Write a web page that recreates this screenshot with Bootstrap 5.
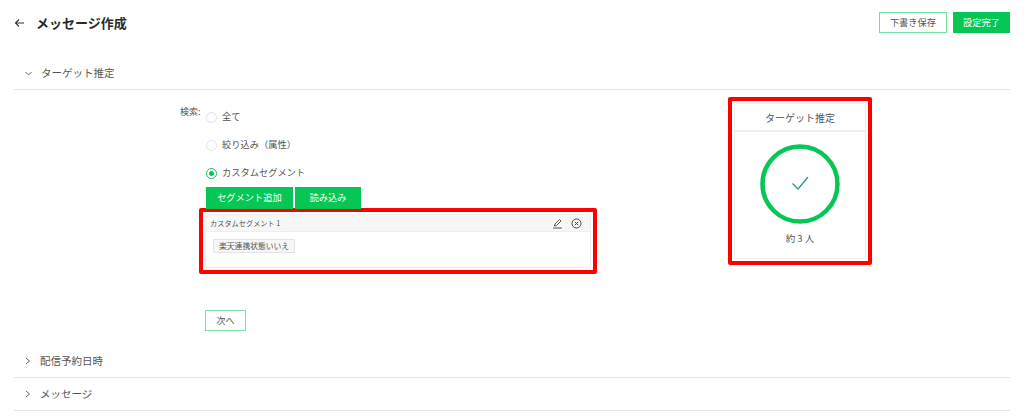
<!DOCTYPE html>
<html lang="ja">
<head>
<meta charset="utf-8">
<title>メッセージ作成</title>
<link href="https://cdn.jsdelivr.net/npm/bootstrap@5.3.0/dist/css/bootstrap.min.css" rel="stylesheet">
<style>
html,body{height:416px;overflow:hidden;background:#fff}
body{font-family:"Noto Sans CJK JP","Noto Sans",sans-serif;color:#555;font-size:10px;padding:0 14px}
.topbar{height:45px}
.page-title{font-size:13px;font-weight:700;color:#2b2b2b;margin:0;line-height:20px}
.back-ic{margin:0 11px 0 0}
.act{font-size:9.25px;height:21px;line-height:1;padding:0;border-radius:0;display:inline-flex;align-items:center;justify-content:center}
.act-line{width:68px;background:#fff;border:1px solid #6fe0a2;color:#555}
.act-fill{width:57px;background:#06c755;border:1px solid #06c755;color:#fff;margin-left:6px}
.sect-head{height:33px;border-bottom:1px solid #e6e6e6;padding-left:11px;font-size:10.5px;color:#555}
.sect-head svg{margin-right:9px}
.first-head{margin-top:12px;height:33px}
.sect-main{height:255px;position:relative}
.left-area{padding:13px 0 0 166px;width:597px}
.search-lbl{width:26px;font-size:9px;line-height:12px;margin-top:3px}
.choice{height:28px;font-size:9.25px;color:#555;gap:5px;padding-left:0}
.dot{width:11px;height:11px;border-radius:50%;border:1px solid #e2e2e2;flex:none;background:#fff}
.dot-on{border-color:#06c755;position:relative}
.dot-on::after{content:"";position:absolute;left:2px;top:2px;width:5px;height:5px;border-radius:50%;background:#06c755}
.seg-btn{height:22px;font-size:9.25px;background:#06c755;color:#fff;border:0;border-radius:0;padding:0;display:inline-flex;align-items:center;justify-content:center}
.w-a{width:87px}.w-b{width:66px;margin-left:2px}
.flag-l{border:4px solid #f00;border-radius:2px;padding:2px;margin:-1px 0 0 -6px;width:398px;height:66px;background:#fff}
.seg-box{border:1px solid #eee;height:100%}
.seg-head{height:17px;background:#f7f7f7;border-bottom:1px solid #eee;padding:0 8px 0 4px;font-size:7.2px;color:#555}
.seg-tag{display:inline-block;margin:7px 0 0 7px;border:1px solid #e4e4e4;background:#f7f7f7;font-size:7.8px;line-height:12px;padding:0 5px;color:#555}
.next-btn{width:41px;height:21px;border:1px solid #7fe0a8;background:#fff;color:#555;font-size:9px;margin:36px 0 0 0;padding:0;border-radius:0;display:block}
.next-wrap{padding-left:25px}
.flag-r{position:absolute;left:714px;top:7px;width:144px;height:168px;border:4px solid #f00;border-radius:2px;padding:2px;background:#fff}
.est{border:1px solid #eee;height:100%;border-radius:2px}
.est-head{height:28px;border-bottom:2px solid #eee;font-size:10px;color:#555}
.est-body{padding-top:12px}
.est-num{font-size:9.5px;margin-top:7px;color:#555}
</style>
</head>
<body>
<div class="topbar d-flex align-items-center justify-content-between">
  <div class="d-flex align-items-center">
    <svg class="back-ic" width="11" height="10" viewBox="0 0 11 10"><path d="M10 5H1.5M5 1.5 1.5 5 5 8.5" fill="none" stroke="#333" stroke-width="1.1"/></svg>
    <h1 class="page-title">メッセージ作成</h1>
  </div>
  <div class="d-flex act-group">
    <button class="btn act act-line" type="button">下書き保存</button>
    <button class="btn act act-fill" type="button">設定完了</button>
  </div>
</div>
<div class="sect-head first-head d-flex align-items-center">
  <svg width="7" height="5" viewBox="0 0 7 5"><path d="M.5 1 3.5 4 6.5 1" fill="none" stroke="#666" stroke-width="1"/></svg>ターゲット推定
</div>
<div class="sect-main">
  <div class="left-area">
    <div class="d-flex">
      <div class="search-lbl">検索:</div>
      <div>
        <div class="choice d-flex align-items-center"><span class="dot"></span>全て</div>
        <div class="choice d-flex align-items-center"><span class="dot"></span>絞り込み（属性）</div>
        <div class="choice d-flex align-items-center"><span class="dot dot-on"></span>カスタムセグメント</div>
        <div class="d-flex"><button class="seg-btn w-a" type="button">セグメント追加</button><button class="seg-btn w-b" type="button">読み込み</button></div>
      </div>
    </div>
    <div class="next-wrap">
      <div class="flag-l">
        <div class="seg-box">
          <div class="seg-head d-flex align-items-center justify-content-between">
            <span>カスタムセグメント 1</span>
            <span class="d-flex align-items-center gap-2">
              <svg width="11" height="11" viewBox="0 0 11 11"><path d="M1 10h9M2.5 8 3 6 7.5 1.5 9 3 4.5 7.5Z" fill="none" stroke="#444" stroke-width=".9"/></svg>
              <svg width="11" height="11" viewBox="0 0 11 11"><circle cx="5.5" cy="5.5" r="4.5" fill="none" stroke="#444"/><path d="M3.8 3.8 7.2 7.2M7.2 3.8 3.8 7.2" stroke="#444"/></svg>
            </span>
          </div>
          <span class="seg-tag">楽天連携状態いいえ</span>
        </div>
      </div>
      <button class="next-btn" type="button">次へ</button>
    </div>
  </div>
  <div class="flag-r">
    <div class="est text-center">
      <div class="est-head d-flex align-items-center justify-content-center">ターゲット推定</div>
      <div class="est-body">
        <svg width="80" height="80" viewBox="0 0 80 80"><circle cx="40" cy="40" r="37.5" fill="none" stroke="#06c755" stroke-width="4.5"/><path d="M32.5 39.5 38 45 48 33" fill="none" stroke="#1f9e8f" stroke-width="1.3"/></svg>
        <div class="est-num">約 3 人</div>
      </div>
    </div>
  </div>
</div>
<div class="sect-head d-flex align-items-center">
  <svg width="6" height="8" viewBox="0 0 6 8"><path d="M1 1 4.5 4 1 7" fill="none" stroke="#666" stroke-width="1"/></svg>配信予約日時
</div>
<div class="sect-head d-flex align-items-center">
  <svg width="6" height="8" viewBox="0 0 6 8"><path d="M1 1 4.5 4 1 7" fill="none" stroke="#666" stroke-width="1"/></svg>メッセージ
</div>
<script src="https://cdn.jsdelivr.net/npm/bootstrap@5.3.0/dist/js/bootstrap.bundle.min.js"></script>
</body>
</html>
